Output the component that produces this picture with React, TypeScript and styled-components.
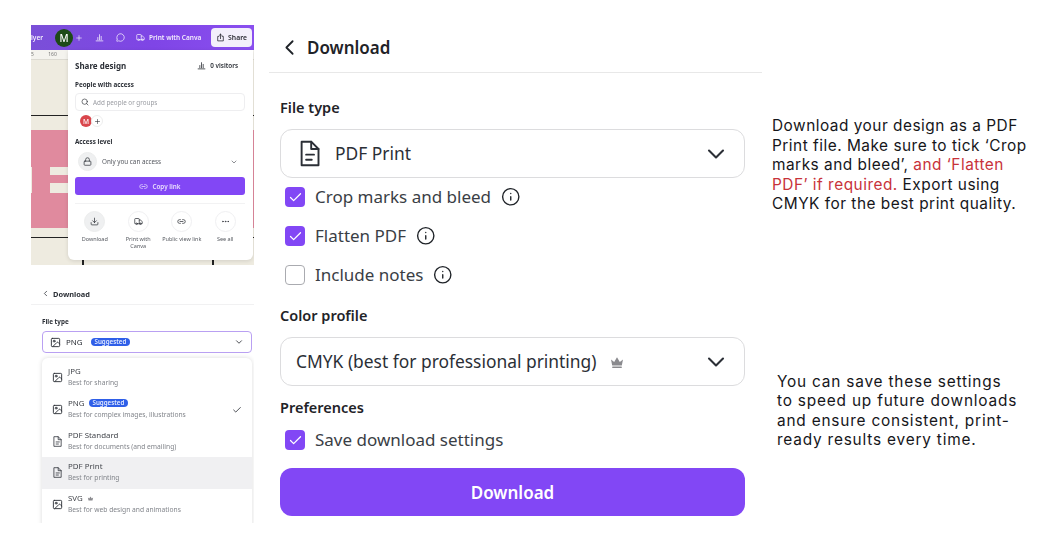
import React from 'react';
import styled, { createGlobalStyle } from 'styled-components';
import {
  ChevronDown,
  ChevronLeft,
  Check,
  Info,
  Search,
  Plus,
  MessageCircle,
  Truck,
  Lock,
  Link2,
  Download as DownloadIcon,
  MoreHorizontal,
  Image as ImageIcon,
} from 'lucide-react';

const GlobalStyle = createGlobalStyle`
  html, body {
    margin: 0;
    padding: 0;
    background: #fff;
  }
  * {
    box-sizing: border-box;
  }
`;

const PURPLE = '#8247f5';

const Page = styled.div`
  width: 1060px;
  height: 560px;
  padding: 25px 0 0 31px;
  display: flex;
  overflow: hidden;
  font-family: 'Noto Sans', 'Open Sans', sans-serif;
  color: #1f2328;
`;

const LeftColumn = styled.div`
  width: 223px;
  flex-shrink: 0;
  display: flex;
  flex-direction: column;
  gap: 18px;
`;

/* ---------- share design shot ---------- */

const ShareShot = styled.div`
  position: relative;
  height: 240px;
  background: #eeebe0;
  overflow: hidden;
  filter: blur(0.25px);
`;

const Toolbar = styled.div`
  height: 25px;
  background: linear-gradient(90deg, #7a4fd8, #7f45e6 55%, #8a4fef);
  display: flex;
  align-items: center;
  color: #fff;
  font-size: 6.5px;
  font-weight: 600;
  padding-right: 2px;
`;

const ToolbarCrop = styled.span`
  width: 24px;
  opacity: 0.9;
`;

const Avatar = styled.div<{ $bg: string; $size: number }>`
  width: ${p => p.$size}px;
  height: ${p => p.$size}px;
  border-radius: 50%;
  background: ${p => p.$bg};
  color: #fff;
  font-size: ${p => p.$size * 0.55}px;
  font-weight: 500;
  display: flex;
  align-items: center;
  justify-content: center;
  flex-shrink: 0;
`;

const ToolbarSep = styled.span<{ $left: number }>`
  display: flex;
  align-items: center;
  margin-left: ${p => p.$left}px;
  opacity: 0.9;
`;

const ShareBtn = styled.div`
  margin-left: auto;
  width: 41px;
  height: 19px;
  background: #f3effb;
  border-radius: 4px;
  color: #2a2a33;
  display: flex;
  align-items: center;
  justify-content: center;
  gap: 3px;
  font-size: 6.8px;
  font-weight: 600;
`;

const Ruler = styled.div`
  height: 10px;
  background: #f4f3ee;
  border-bottom: 1px solid #dcdad2;
  color: #777;
  font-size: 5px;
  line-height: 9px;
  word-spacing: 13px;
`;

const BlackRule = styled.div<{ $top: number }>`
  height: 1px;
  background: #222;
  margin-top: ${p => p.$top}px;
`;

const PinkBlock = styled.div`
  position: relative;
  height: 98px;
  margin-top: 14px;
  background: #e08a9e;
`;

const CreamPiece = styled.div<{ $x: number; $y: number; $w: number; $h: number }>`
  position: absolute;
  left: ${p => p.$x}px;
  top: ${p => p.$y}px;
  width: ${p => p.$w}px;
  height: ${p => p.$h}px;
  background: #eeebe0;
`;

const CanvasTick = styled.div<{ $x: number }>`
  position: absolute;
  left: ${p => p.$x}px;
  bottom: 0;
  width: 1.5px;
  height: 5px;
  background: #222;
`;

const Popup = styled.div`
  position: absolute;
  left: 37px;
  top: 25px;
  width: 185px;
  height: 210px;
  background: #fff;
  border-radius: 0 0 6px 6px;
  box-shadow: 0 1px 4px rgba(0, 0, 0, 0.12);
  padding: 9px 8px 0 7px;
  font-size: 6.3px;
  color: #2b2f36;
`;

const PopupHead = styled.div`
  display: flex;
  align-items: center;
  justify-content: space-between;
  padding-right: 7px;
  height: 12px;
`;

const PopupTitle = styled.span`
  font-size: 8px;
  font-weight: 700;
`;

const Visitors = styled.span`
  display: flex;
  align-items: center;
  gap: 4px;
  font-weight: 600;
`;

const PopupLabel = styled.div<{ $top: number }>`
  margin-top: ${p => p.$top}px;
  font-weight: 700;
  line-height: 9px;
`;

const PeopleInput = styled.div`
  margin-top: 4px;
  height: 18px;
  border: 1px solid #eeeef0;
  border-radius: 4px;
  display: flex;
  align-items: center;
  gap: 4px;
  padding-left: 5px;
  color: #9a9ca2;
`;

const AvatarRow = styled.div`
  margin: 4px 0 0 5px;
  display: flex;
  align-items: center;
`;

const PlusCircle = styled.div`
  width: 12px;
  height: 12px;
  margin-left: -1px;
  border: 1px solid #eee;
  border-radius: 50%;
  display: flex;
  align-items: center;
  justify-content: center;
  background: #fff;
`;

const AccessRow = styled.div`
  margin: 6px 7px 0 3px;
  display: flex;
  align-items: center;
  gap: 5px;
  color: #55585f;
`;

const IconCircle = styled.div<{ $size: number; $filled?: boolean }>`
  width: ${p => p.$size}px;
  height: ${p => p.$size}px;
  border-radius: 50%;
  flex-shrink: 0;
  display: flex;
  align-items: center;
  justify-content: center;
  color: #33363c;
  border: 1px solid ${p => (p.$filled ? '#eceded' : '#f0f0f2')};
  background: ${p => (p.$filled ? '#eff0f1' : '#fff')};
`;

const RowEnd = styled.span`
  margin-left: auto;
  display: flex;
`;

const CopyLink = styled.div`
  margin-top: 6px;
  height: 18px;
  background: ${PURPLE};
  border-radius: 3px;
  color: #e9defd;
  display: flex;
  align-items: center;
  justify-content: center;
  gap: 4px;
  font-weight: 600;
`;

const PopupDivider = styled.div`
  height: 1px;
  margin-top: 8px;
  background: #f2f2f3;
`;

const ActionRow = styled.div`
  margin-top: 7px;
  display: grid;
  grid-template-columns: repeat(4, 43.5px);
  margin-left: -2px;
`;

const ActionItem = styled.div`
  display: flex;
  flex-direction: column;
  align-items: center;
  gap: 4px;
  text-align: center;
  font-size: 5.5px;
  line-height: 7px;
  white-space: pre-line;
  color: #55585f;
`;

/* ---------- file type shot ---------- */

const TypeShot = styled.div`
  height: 240px;
  overflow: hidden;
  filter: blur(0.25px);
  color: #2b2f36;
`;

const SmallHead = styled.div`
  height: 22px;
  display: flex;
  align-items: center;
  gap: 3px;
  padding-left: 10px;
  border-bottom: 1px solid #f1f1f2;
  font-size: 7.4px;
  font-weight: 700;
`;

const SmallLabel = styled.div`
  margin: 12px 0 0 11px;
  font-size: 6.3px;
  font-weight: 700;
  line-height: 9px;
`;

const SmallSelect = styled.div`
  margin: 5px 2px 0 11px;
  height: 22px;
  border: 1.5px solid #b9a0f2;
  border-radius: 4px;
  display: flex;
  align-items: center;
  padding: 0 7px;
  font-size: 7.9px;
`;

const SmallName = styled.span`
  margin: 0 8px 0 5px;
`;

const Badge = styled.span`
  background: #2f5fe8;
  color: #e4ebff;
  font-size: 6.2px;
  font-weight: 600;
  line-height: 8px;
  padding: 0 4px;
  border-radius: 4px;
`;

const Dropdown = styled.div`
  margin: 5px 2px 0 11px;
  height: 170px;
  border-radius: 6px 6px 0 0;
  background: #fff;
  box-shadow: 0 0 5px rgba(0, 0, 0, 0.14);
  padding-top: 4px;
`;

const TypeItem = styled.div<{ $active?: boolean }>`
  height: 31.7px;
  display: flex;
  align-items: center;
  gap: 5px;
  padding: 0 10px 0 10px;
  background: ${p => (p.$active ? '#f0f0f2' : 'transparent')};
`;

const TypeText = styled.div`
  display: flex;
  flex-direction: column;
`;

const TypeTitle = styled.div`
  display: flex;
  align-items: center;
  gap: 4px;
  font-size: 7.9px;
  line-height: 10px;
  color: #44474d;
`;

const TypeSub = styled.div`
  font-size: 6.7px;
  line-height: 13px;
  color: #82858b;
`;

/* ---------- download panel ---------- */

const Panel = styled.div`
  width: 493px;
  margin-left: 15px;
  flex-shrink: 0;
`;

const PanelHeader = styled.div`
  height: 48px;
  padding: 0 0 2px 8px;
  display: flex;
  align-items: center;
  gap: 5px;
  border-bottom: 1px solid #e8e8e8;
  font-size: 17px;
  font-weight: 600;
`;

const PanelBody = styled.div`
  padding: 0 17px 0 11px;
  display: flex;
  flex-direction: column;
`;

const FieldLabel = styled.div<{ $top: number }>`
  margin-top: ${p => p.$top}px;
  height: 20px;
  line-height: 18px;
  font-size: 14.5px;
  font-weight: 600;
`;

const Select = styled.div<{ $pad: number }>`
  margin-top: 11px;
  height: 49px;
  border: 1px solid #dcdcde;
  border-radius: 12px;
  display: flex;
  align-items: center;
  gap: 12px;
  padding: 0 14px 0 ${p => p.$pad}px;
  font-size: 17.4px;
  color: #2b2f36;
`;

const SelectText = styled.span`
  margin-bottom: 2px;
`;

const Crown = styled.svg`
  flex-shrink: 0;
`;

const OptionList = styled.div<{ $top: number }>`
  margin-top: ${p => p.$top}px;
  padding-left: 5px;
  display: flex;
  flex-direction: column;
  gap: 17px;
`;

const OptionRow = styled.div`
  height: 22px;
  display: flex;
  align-items: center;
  font-size: 17px;
  color: #3a3e45;
`;

const OptionText = styled.span`
  margin-bottom: 2px;
`;

const Box = styled.span<{ $on: boolean }>`
  width: 20px;
  height: 20px;
  margin-right: 10px;
  border-radius: 4px;
  flex-shrink: 0;
  display: flex;
  align-items: center;
  justify-content: center;
  color: #fff;
  background: ${p => (p.$on ? PURPLE : '#fff')};
  border: ${p => (p.$on ? 'none' : '1.5px solid #aaabb0')};
`;

const InfoMark = styled.span`
  display: flex;
  margin-left: 10px;
  color: #1f2328;
`;

const DownloadButton = styled.button`
  margin-top: 17px;
  height: 48px;
  border: none;
  border-radius: 12px;
  background: ${PURPLE};
  color: #fff;
  font-family: inherit;
  font-size: 17px;
  font-weight: 600;
`;

/* ---------- side notes ---------- */

const Notes = styled.div`
  width: 280px;
  margin-left: 10px;
  display: flex;
  flex-direction: column;
  font-family: 'Inter', 'Noto Sans', sans-serif;
  font-size: 15.4px;
  line-height: 19.5px;
  white-space: nowrap;
  color: #16161a;
`;

const Note = styled.p<{ $top: number; $left: number; $spacing: number }>`
  margin: ${p => p.$top}px 0 0 ${p => p.$left}px;
  letter-spacing: ${p => p.$spacing}px;
`;

const Red = styled.span`
  color: #c8323a;
`;

const DocIcon = ({ size, stroke = 1.7 }: { size: number; stroke?: number }) => (
  <svg width={size} height={size} viewBox="0 0 24 24" fill="none" stroke="currentColor" strokeWidth={stroke} strokeLinejoin="round" strokeLinecap="round">
    <path d="M5 1.5h8.5L20 8v14.5H5z" />
    <path d="M13.5 1.5V8H20" />
    <path d="M9 13h7M9 17.5h5" />
  </svg>
);

const CrownIcon = ({ size }: { size: number }) => (
  <Crown width={size} height={size} viewBox="0 0 16 16" fill="#8a8a8e">
    <path d="M2 5.5l3.2 2.6L8 3.2l2.8 4.9L14 5.5l-1.2 6H3.2z" />
    <rect x="3.2" y="12.4" width="9.6" height="1.5" rx="0.5" />
  </Crown>
);

const BarsIcon = ({ size }: { size: number }) => (
  <svg width={size} height={size} viewBox="0 0 16 16" fill="none" stroke="currentColor" strokeWidth={1.4} strokeLinecap="round">
    <path d="M2 14h12M5 12V8M8 12V3M11 12V6" />
  </svg>
);

const UploadIcon = ({ size }: { size: number }) => (
  <svg width={size} height={size} viewBox="0 0 16 16" fill="none" stroke="currentColor" strokeWidth={1.4} strokeLinecap="round" strokeLinejoin="round">
    <path d="M5 6H3v8h10V6h-2" />
    <path d="M8 10V2M5.5 4.5L8 2l2.5 2.5" />
  </svg>
);

const fileTypes = [
  { name: 'JPG', sub: 'Best for sharing', kind: 'image' },
  { name: 'PNG', sub: 'Best for complex images, illustrations', kind: 'image', badge: true, checked: true },
  { name: 'PDF Standard', sub: 'Best for documents (and emailing)', kind: 'doc' },
  { name: 'PDF Print', sub: 'Best for printing', kind: 'doc', active: true },
  { name: 'SVG', sub: 'Best for web design and animations', kind: 'image', crown: true },
];

const shareActions = [
  { label: 'Download', icon: <DownloadIcon size={9} />, filled: true },
  { label: 'Print with\nCanva', icon: <Truck size={9} /> },
  { label: 'Public view link', icon: <Link2 size={9} /> },
  { label: 'See all', icon: <MoreHorizontal size={9} /> },
];

const ShareDesignShot = () => (
  <ShareShot>
    <Toolbar>
      <ToolbarCrop>lyer</ToolbarCrop>
      <Avatar $bg="#1d4a17" $size={18}>M</Avatar>
      <ToolbarSep $left={2}><Plus size={8} /></ToolbarSep>
      <ToolbarSep $left={12}><BarsIcon size={9} /></ToolbarSep>
      <ToolbarSep $left={12}><MessageCircle size={9} /></ToolbarSep>
      <ToolbarSep $left={11}><Truck size={9} /></ToolbarSep>
      <ToolbarSep $left={4}>Print with Canva</ToolbarSep>
      <ShareBtn><UploadIcon size={9} />Share</ShareBtn>
    </Toolbar>
    <Ruler>5 160</Ruler>
    <BlackRule $top={55} />
    <PinkBlock>
      <CreamPiece $x={0} $y={37} $w={1} $h={26} />
      <CreamPiece $x={19} $y={37} $w={18} $h={8} />
      <CreamPiece $x={19} $y={53} $w={18} $h={10} />
    </PinkBlock>
    <BlackRule $top={9} />
    <CanvasTick $x={51} />
    <CanvasTick $x={181} />
    <Popup>
      <PopupHead>
        <PopupTitle>Share design</PopupTitle>
        <Visitors><BarsIcon size={9} />0 visitors</Visitors>
      </PopupHead>
      <PopupLabel $top={9}>People with access</PopupLabel>
      <PeopleInput><Search size={8} color="#33363c" />Add people or groups</PeopleInput>
      <AvatarRow>
        <Avatar $bg="#d9464c" $size={12}>M</Avatar>
        <PlusCircle><Plus size={7} /></PlusCircle>
      </AvatarRow>
      <PopupLabel $top={10}>Access level</PopupLabel>
      <AccessRow>
        <IconCircle $size={19} $filled><Lock size={9} /></IconCircle>
        Only you can access
        <RowEnd><ChevronDown size={8} /></RowEnd>
      </AccessRow>
      <CopyLink><Link2 size={9} />Copy link</CopyLink>
      <PopupDivider />
      <ActionRow>
        {shareActions.map(a => (
          <ActionItem key={a.label}>
            <IconCircle $size={21} $filled={a.filled}>{a.icon}</IconCircle>
            {a.label}
          </ActionItem>
        ))}
      </ActionRow>
    </Popup>
  </ShareShot>
);

const FileTypeShot = () => (
  <TypeShot>
    <SmallHead><ChevronLeft size={9} />Download</SmallHead>
    <SmallLabel>File type</SmallLabel>
    <SmallSelect>
      <ImageIcon size={11} />
      <SmallName>PNG</SmallName>
      <Badge>Suggested</Badge>
      <RowEnd><ChevronDown size={10} /></RowEnd>
    </SmallSelect>
    <Dropdown>
      {fileTypes.map(t => (
        <TypeItem key={t.name} $active={t.active}>
          {t.kind === 'image' ? <ImageIcon size={11} /> : <DocIcon size={11} />}
          <TypeText>
            <TypeTitle>
              {t.name}
              {t.badge && <Badge>Suggested</Badge>}
              {t.crown && <CrownIcon size={7} />}
            </TypeTitle>
            <TypeSub>{t.sub}</TypeSub>
          </TypeText>
          {t.checked && <RowEnd><Check size={10} /></RowEnd>}
        </TypeItem>
      ))}
    </Dropdown>
  </TypeShot>
);

const Option = ({ label, on, info }: { label: string; on: boolean; info?: boolean }) => (
  <OptionRow>
    <Box $on={on}>{on && <Check size={15} strokeWidth={2} />}</Box>
    <OptionText>{label}</OptionText>
    {info && <InfoMark><Info size={19.5} strokeWidth={1.7} /></InfoMark>}
  </OptionRow>
);

export default function App() {
  return (
    <Page>
      <GlobalStyle />
      <LeftColumn>
        <ShareDesignShot />
        <FileTypeShot />
      </LeftColumn>

      <Panel>
        <PanelHeader>
          <ChevronLeft size={25} strokeWidth={1.7} />
          Download
        </PanelHeader>
        <PanelBody>
          <FieldLabel $top={25}>File type</FieldLabel>
          <Select $pad={15}>
            <DocIcon size={27} />
            <SelectText>PDF Print</SelectText>
            <RowEnd><ChevronDown size={28} strokeWidth={1.8} /></RowEnd>
          </Select>
          <OptionList $top={8}>
            <Option label="Crop marks and bleed" on info />
            <Option label="Flatten PDF" on info />
            <Option label="Include notes" on={false} info />
          </OptionList>
          <FieldLabel $top={20}>Color profile</FieldLabel>
          <Select $pad={15}>
            <SelectText>CMYK (best for professional printing)</SelectText>
            <CrownIcon size={16} />
            <RowEnd><ChevronDown size={28} strokeWidth={1.8} /></RowEnd>
          </Select>
          <FieldLabel $top={12}>Preferences</FieldLabel>
          <OptionList $top={11}>
            <Option label="Save download settings" on />
          </OptionList>
          <DownloadButton>Download</DownloadButton>
        </PanelBody>
      </Panel>

      <Notes>
        <Note $top={91} $left={0} $spacing={0.5}>
          Download your design as a PDF
          <br />
          Print file. Make sure to tick ‘Crop
          <br />
          marks and bleed’, <Red>and ‘Flatten</Red>
          <br />
          <Red>PDF’ if required.</Red> Export using
          <br />
          CMYK for the best print quality.
        </Note>
        <Note $top={158} $left={5} $spacing={0.8}>
          You can save these settings
          <br />
          to speed up future downloads
          <br />
          and ensure consistent, print-
          <br />
          ready results every time.
        </Note>
      </Notes>
    </Page>
  );
}
